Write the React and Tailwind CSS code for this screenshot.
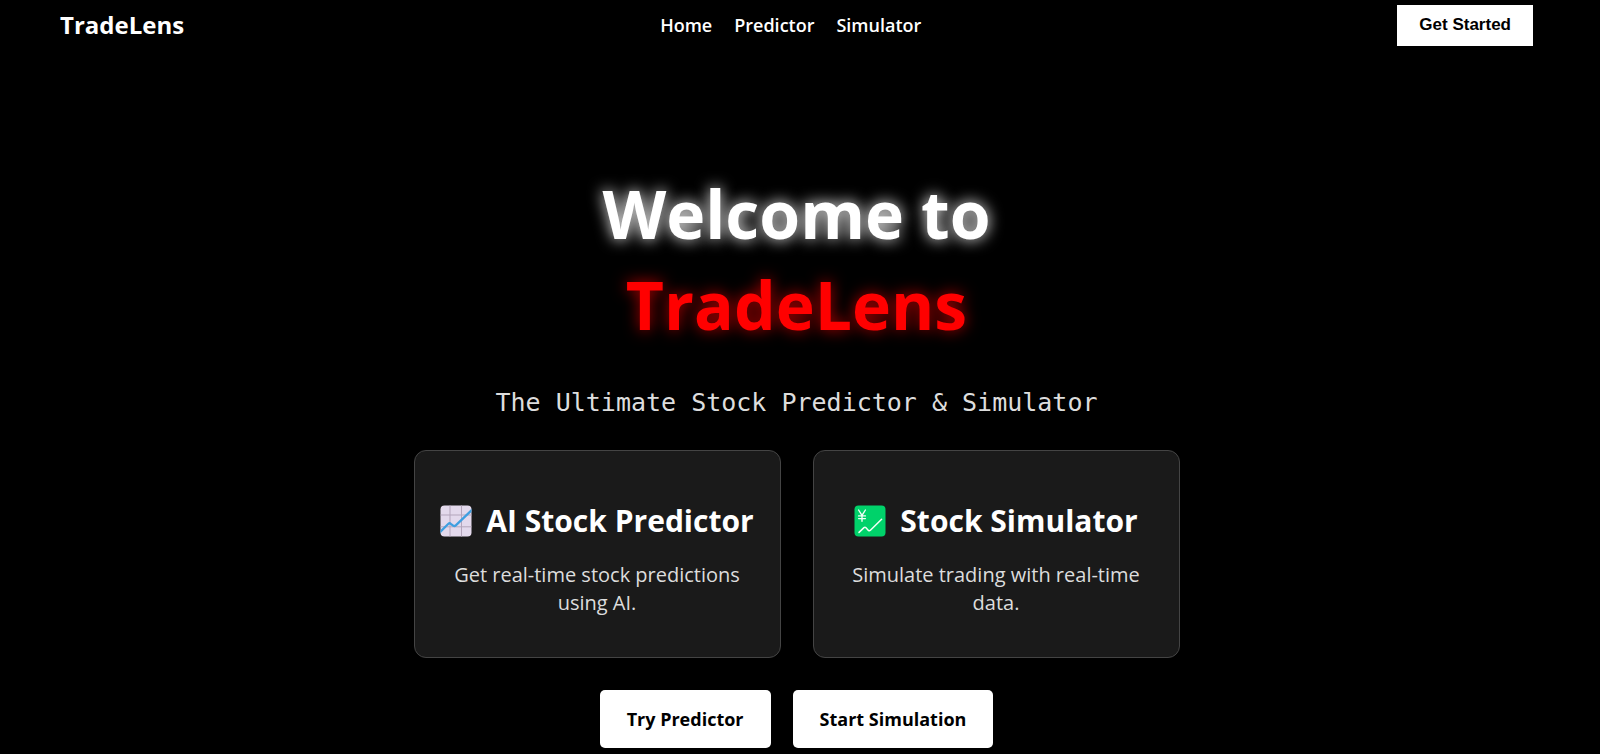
const links = ["Home", "Predictor", "Simulator"];

function ChartIcon() {
  return (
    <svg viewBox="0 0 32 32" className="size-8 shrink-0" aria-hidden="true">
      <defs>
        <clipPath id="chart-tile">
          <rect x="0.5" y="0.5" width="31" height="31" rx="4" />
        </clipPath>
      </defs>
      <g clipPath="url(#chart-tile)">
        <rect width="32" height="32" fill="#e3d9ec" />
        <path d="M10 0V32M21.5 0V32M0 10H32M0 21.8H32" stroke="#b3a5bb" strokeWidth="1" fill="none" />
        <path d="M-1 28L8.4 18.8Q9.6 17.8 10.8 18.8L13.4 20.8Q14.6 21.4 15.8 20.4L33 4" stroke="#3f9fe0" strokeWidth="2.3" fill="none" />
      </g>
    </svg>
  );
}

function YenChartIcon() {
  return (
    <svg viewBox="0 0 32 32" className="size-8 shrink-0" aria-hidden="true">
      <rect x="0.5" y="0.5" width="31" height="31" rx="4" fill="#00d26a" />
      <g stroke="#f2fff7" fill="none" strokeLinecap="round" strokeLinejoin="round">
        <path d="M4.6 5L8 10.4L11.4 5M8 10.4V16.2M4.6 10.9H11.4M4.6 13.6H11.4" strokeWidth="1.4" />
        <path d="M5 27.4L10 22.6Q11 21.9 12 22.8L14.4 25.4Q15.4 26.2 16.4 25.2L27.6 14.2" strokeWidth="1.5" />
      </g>
    </svg>
  );
}

function Card({ icon, title, children }) {
  return (
    <article className="flex w-[367px] flex-col gap-[18px] rounded-xl border border-[#444444] bg-[#1a1a1a] px-[30px] pt-12 pb-10 text-center">
      <h2 className="flex items-center justify-center gap-3.5 text-[30px] leading-11 font-bold whitespace-nowrap text-white">
        {icon}
        {title}
      </h2>
      <p className="text-xl leading-7 text-[#dddddd]">{children}</p>
    </article>
  );
}

function ActionButton({ children }) {
  return (
    <button type="button" className="h-[58px] rounded-[5px] bg-white px-[27px] text-lg font-bold text-black">
      {children}
    </button>
  );
}

export default function App() {
  return (
    <div className="min-h-screen bg-black pr-[7px] font-['Open_Sans','Noto_Sans',sans-serif] text-white">
      <header className="flex h-[50px] items-center justify-between px-[60px]">
        <a href="#home" className="text-2xl font-bold">TradeLens</a>
        <nav className="flex gap-[22px] text-lg font-semibold">
          {links.map((label) => (
            <a key={label} href={`#${label.toLowerCase()}`}>{label}</a>
          ))}
        </nav>
        <button type="button" className="h-[41px] bg-white px-[22px] font-['Liberation_Sans',Arial,sans-serif] text-[17px] font-bold text-black">
          Get Started
        </button>
      </header>
      <main className="flex flex-col items-center pt-[118px] pb-1.5">
        <h1 className="text-center text-[66px] leading-[91px] font-bold [text-shadow:0_0_15px_#ffffff]">
          Welcome to
          <span className="block text-[#ff0000] [text-shadow:0_0_15px_#ff0000b3]">TradeLens</span>
        </h1>
        <p className="mt-[35px] font-['DejaVu_Sans_Mono',monospace] text-[25px] leading-9 text-[#dddddd]">
          The Ultimate Stock Predictor &amp; Simulator
        </p>
        <section className="mt-[29px] flex gap-8">
          <Card icon={<ChartIcon />} title="AI Stock Predictor">Get real-time stock predictions using AI.</Card>
          <Card icon={<YenChartIcon />} title="Stock Simulator">Simulate trading with real-time data.</Card>
        </section>
        <div className="mt-8 flex gap-[22px]">
          <ActionButton>Try Predictor</ActionButton>
          <ActionButton>Start Simulation</ActionButton>
        </div>
      </main>
    </div>
  );
}
